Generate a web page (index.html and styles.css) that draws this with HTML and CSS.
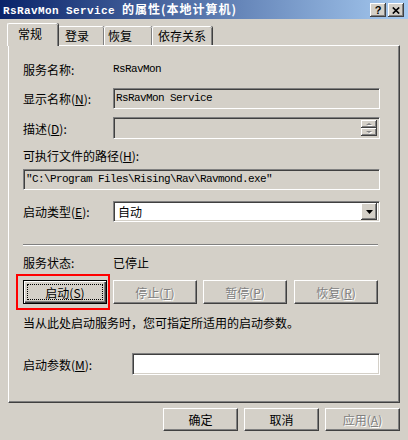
FILE: index.html
```html
<!DOCTYPE html>
<html>
<head>
<meta charset="utf-8">
<link rel="stylesheet" href="styles.css">
</head>
<body>
<div class="titlebar">
  <div class="title"><span class="lat">RsRavMon Service </span><span class="cjk">的属性(本地计算机)</span></div>
  <div class="capbtn help">?</div>
  <div class="capbtn close"><svg width="8" height="7" viewBox="0 0 8 7"><path d="M0.8 0.5 L7.2 6.5 M7.2 0.5 L0.8 6.5" stroke="#000" stroke-width="1.7" fill="none"/></svg></div>
</div>
<div class="main">
  <div class="tabs">
    <div class="tab sel">常规</div>
    <div class="tab t2">登录</div>
    <div class="tab t3">恢复</div>
    <div class="tab t4">依存关系</div>
  </div>
  <div class="panel">
    <div class="row r1"><div class="lbl">服务名称:</div><div class="mono">RsRavMon</div></div>
    <div class="row r2"><div class="lbl">显示名称(<u>N</u>):</div><div class="field ro mono">RsRavMon Service</div></div>
    <div class="row r3"><div class="lbl">描述(<u>D</u>):</div><div class="field ro desc"><div class="vscroll"><div class="sb"><i class="arr up"></i></div><div class="sb"><i class="arr down"></i></div></div></div></div>
    <div class="row r4">可执行文件的路径(<u>H</u>):</div>
    <div class="field ro mono path">"C:\Program Files\Rising\Rav\Ravmond.exe"</div>
    <div class="row r6"><div class="lbl">启动类型(<u>E</u>):</div><div class="combo"><span class="cval">自动</span><div class="drop"><svg width="7" height="4" viewBox="0 0 7 4"><path d="M0 0 H7 L3.5 4 Z" fill="#000"/></svg></div></div></div>
    <div class="sep"></div>
    <div class="row r7"><div class="lbl">服务状态:</div><div>已停止</div></div>
    <div class="btnrow">
      <div class="btn def">启动(<u>S</u>)</div>
      <div class="btn dis">停止(<u>T</u>)</div>
      <div class="btn dis">暂停(<u>P</u>)</div>
      <div class="btn dis last">恢复(<u>R</u>)</div>
    </div>
    <div class="hint">当从此处启动服务时，您可指定所适用的启动参数。</div>
    <div class="row r10"><div class="lbl wide">启动参数(<u>M</u>):</div><div class="field white"></div></div>
  </div>
  <div class="footer">
    <div class="btn fb">确定</div>
    <div class="btn fb">取消</div>
    <div class="btn fb dis">应用(<u>A</u>)</div>
  </div>
</div>
<div class="annot"></div>
</body>
</html>
```
FILE: styles.css
```css
* { box-sizing: border-box; }
html, body { margin: 0; padding: 0; }
body {
  width: 408px;
  height: 440px;
  overflow: hidden;
  position: relative;
  background: #D4D0C8;
  font-family: "Noto Sans CJK SC", sans-serif;
  font-size: 12px;
  color: #000;
}
u { text-decoration: underline; text-underline-offset: 1px; }

.titlebar {
  height: 19px;
  background: linear-gradient(to right, #0A246A, #A6CAF0);
  display: flex;
  align-items: center;
  padding: 0 4px 0 3px;
}
.title {
  flex: 1;
  color: #fff;
  font-weight: bold;
  white-space: nowrap;
  line-height: 19px;
}
.title .lat { font-family: "Liberation Mono", monospace; font-size: 11px; letter-spacing: 0.4px; }
.title .cjk { font-family: "Noto Sans CJK SC", sans-serif; font-size: 12px; letter-spacing: 1px; }
.capbtn {
  width: 16px;
  height: 14px;
  background: #D4D0C8;
  box-shadow: inset -1px -1px #404040, inset 1px 1px #fff, inset -2px -2px #808080;
  display: flex;
  align-items: center;
  justify-content: center;
}
.help {
  margin-right: 2px;
  font-family: "Liberation Sans", sans-serif;
  font-weight: bold;
  font-size: 11px;
  line-height: 14px;
  padding-top: 1px;
}
.close svg { display: block; margin-top: 1px; }

.main { padding: 4px 8px 0 8px; }

.tabs {
  display: flex;
  align-items: flex-end;
  height: 22px;
  margin-left: -1px;
}
.tab {
  height: 19px;
  border-top: 1px solid #fff;
  border-left: 1px solid #fff;
  border-top-left-radius: 2px;
  border-top-right-radius: 2px;
  box-shadow: inset -1px 0 #808080, 1px 0 #404040;
  background: #D4D0C8;
  line-height: 18px;
  white-space: nowrap;
}
.tab.sel {
  position: relative;
  z-index: 2;
  height: 23px;
  margin-bottom: -1px;
  width: 51px;
  padding-left: 10px;
  line-height: 20px;
}
.t2 { width: 46px; padding-left: 6px; }
.t3 { width: 48px; padding-left: 3px; }
.t4 { width: 60px; padding-left: 5px; }

.panel {
  height: 358px;
  border-top: 1px solid #fff;
  border-left: 1px solid #fff;
  border-right: 1px solid #404040;
  border-bottom: 1px solid #404040;
  box-shadow: inset -1px -1px #808080;
  padding: 14px 19px 0 14px;
}
.row { display: flex; align-items: center; }
.lbl { width: 90px; flex: none; }
.lbl.wide { width: 109px; }
.mono { font-family: "Liberation Mono", monospace; font-size: 11px; letter-spacing: -0.6px; }

.field {
  flex: 1;
  height: 100%;
  border: 1px solid;
  border-color: #808080 #fff #fff #808080;
  box-shadow: inset 1px 1px #404040, inset -1px -1px #D4D0C8;
  padding: 2px 2px 0 2px;
  line-height: 14px;
  white-space: nowrap;
}
.field.ro { background: #D4D0C8; }
.field.white { background: #fff; }

.r1 { height: 18px; }
.r2 { margin-top: 10px; height: 21px; }
.r3 { margin-top: 8px; height: 22px; }
.r4 { margin-top: 8px; height: 16px; }
.field.path { margin-top: 6px; height: 21px; }
.r6 { margin-top: 11px; height: 21px; }
.sep { margin-top: 22px; height: 2px; border-top: 1px solid #808080; border-bottom: 1px solid #fff; margin-right: 2px; }
.r7 { margin-top: 8px; height: 16px; }
.btnrow { margin-top: 10px; height: 24px; display: flex; gap: 6px; margin-right: 2px; }
.hint { margin-top: 11px; height: 16px; line-height: 16px; white-space: nowrap; }
.r10 { margin-top: 22px; height: 22px; }

.desc { display: flex; justify-content: flex-end; padding: 2px; }
.vscroll { width: 16px; display: flex; flex-direction: column; }
.sb {
  flex: 1;
  background: #D4D0C8;
  box-shadow: inset -1px -1px #404040, inset 1px 1px #fff, inset -2px -2px #808080;
  display: flex;
  align-items: center;
  justify-content: center;
}
.arr { width: 0; height: 0; border-left: 3px solid transparent; border-right: 3px solid transparent; filter: drop-shadow(1px 1px 0 #fff); }
.arr.up { border-bottom: 2px solid #808080; }
.arr.down { border-top: 2px solid #808080; }

.combo {
  flex: 1;
  height: 21px;
  background: #fff;
  border: 1px solid;
  border-color: #808080 #fff #fff #808080;
  box-shadow: inset 1px 1px #404040, inset -1px -1px #D4D0C8;
  padding: 2px;
  display: flex;
  align-items: center;
}
.cval { flex: 1; padding-left: 2px; line-height: 15px; }
.drop {
  width: 16px;
  height: 17px;
  background: #D4D0C8;
  box-shadow: inset -1px -1px #404040, inset 1px 1px #fff, inset -2px -2px #808080;
  display: flex;
  align-items: center;
  justify-content: center;
}
.drop svg { display: block; }

.btn {
  width: 84px;
  height: 24px;
  background: #D4D0C8;
  border: 1px solid;
  border-color: #fff #404040 #404040 #fff;
  box-shadow: inset -1px -1px #808080;
  display: flex;
  align-items: center;
  justify-content: center;
  white-space: nowrap;
  position: relative;
}
.btn.last { margin-left: auto; }
.btn.def {
  border: 1px solid #000;
  box-shadow: inset 1px 1px #fff, inset -1px -1px #404040, inset -2px -2px #808080;
}
.btn.def::after {
  content: "";
  position: absolute;
  left: 3px; top: 3px; right: 3px; bottom: 3px;
  border: 1px dotted #000;
}
.btn.dis { color: #808080; text-shadow: 1px 1px 0 #fff; }

.footer {
  display: flex;
  justify-content: flex-end;
  gap: 6px;
  margin-top: 5px;
}
.btn.fb { width: 75px; height: 23px; }

.annot {
  position: absolute;
  left: 16px;
  top: 274px;
  width: 94px;
  height: 36px;
  border: 2px solid #f00;
}
```
